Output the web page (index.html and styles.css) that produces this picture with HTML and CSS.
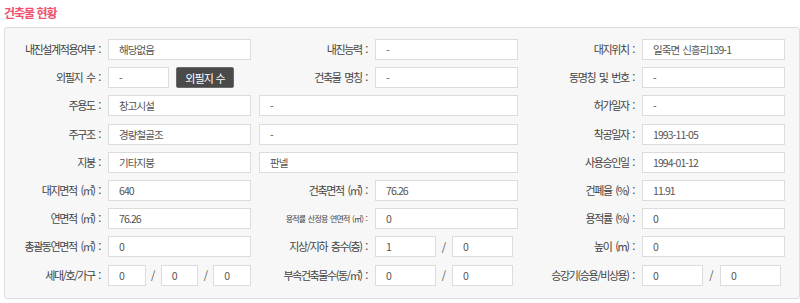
FILE: index.html
```html
<!DOCTYPE html>
<html lang="ko">
<head>
    <meta charset="UTF-8">
    <title>건축물 현황</title>
    <link rel="stylesheet" href="styles.css">
</head>
<body>
    <!-- 건축물 현황 -->
    <h2 class="section-title">건축물 현황</h2>
    <div class="info-panel">
        <div class="info-grid">
            <!-- 1행 -->
            <div class="info-label">내진설계적용여부 :</div>
            <div class="info-input">해당없음</div>
            <div class="info-label">내진능력 :</div>
            <div class="info-input">-</div>
            <div class="info-label">대지위치 :</div>
            <div class="info-input">일죽면 신흥리139-1</div>

            <!-- 2행 -->
            <div class="info-label">외필지 수 :</div>
            <div class="field-row">
                <div class="info-input w61">-</div>
                <button class="btn-dark">외필지 수</button>
            </div>
            <div class="info-label">건축물 명칭 :</div>
            <div class="info-input">-</div>
            <div class="info-label">동명칭 및 번호 :</div>
            <div class="info-input">-</div>

            <!-- 3행 -->
            <div class="info-label">주용도 :</div>
            <div class="info-input">창고시설</div>
            <div class="info-input span-wide">-</div>
            <div class="info-label">허가일자 :</div>
            <div class="info-input">-</div>

            <!-- 4행 -->
            <div class="info-label">주구조 :</div>
            <div class="info-input">경량철골조</div>
            <div class="info-input span-wide">-</div>
            <div class="info-label">착공일자 :</div>
            <div class="info-input">1993-11-05</div>

            <!-- 5행 -->
            <div class="info-label">지붕 :</div>
            <div class="info-input">기타지붕</div>
            <div class="info-input span-wide">판넬</div>
            <div class="info-label">사용승인일 :</div>
            <div class="info-input">1994-01-12</div>

            <!-- 6행 -->
            <div class="info-label">대지면적 (㎡) :</div>
            <div class="info-input">640</div>
            <div class="info-label">건축면적 (㎡) :</div>
            <div class="info-input">76.26</div>
            <div class="info-label">건폐율 (%) :</div>
            <div class="info-input">11.91</div>

            <!-- 7행 -->
            <div class="info-label">연면적 (㎡) :</div>
            <div class="info-input">76.26</div>
            <div class="info-label small">용적률 산정용 연면적 (㎡) :</div>
            <div class="info-input">0</div>
            <div class="info-label">용적률 (%) :</div>
            <div class="info-input">0</div>

            <!-- 8행 -->
            <div class="info-label">총괄동연면적 (㎡) :</div>
            <div class="info-input">0</div>
            <div class="info-label">지상/지하 층수(층) :</div>
            <div class="field-row">
                <div class="info-input w61">1</div>
                <span class="sep">/</span>
                <div class="info-input w61">0</div>
            </div>
            <div class="info-label">높이 (m) :</div>
            <div class="info-input">0</div>

            <!-- 9행 -->
            <div class="info-label">세대/호/가구 :</div>
            <div class="field-row">
                <div class="info-input w38">0</div>
                <span class="sep sep-narrow">/</span>
                <div class="info-input w38">0</div>
                <span class="sep sep-narrow">/</span>
                <div class="info-input w38">0</div>
            </div>
            <div class="info-label">부속건축물수(동/㎡) :</div>
            <div class="field-row">
                <div class="info-input w61">0</div>
                <span class="sep">/</span>
                <div class="info-input w61">0</div>
            </div>
            <div class="info-label">승강기(승용/비상용) :</div>
            <div class="field-row">
                <div class="info-input w61">0</div>
                <span class="sep sep-wide">/</span>
                <div class="info-input w61">0</div>
            </div>
        </div>
    </div>
</body>
</html>
```

FILE: styles.css
```css
* {
    margin: 0;
    padding: 0;
    box-sizing: border-box;
}

body {
    font-family: "Noto Sans CJK KR", "Noto Sans", sans-serif;
    color: #444;
    background-color: #fff;
    padding-left: 4px;
}

/* 제목 */
.section-title {
    font-size: 12px;
    font-weight: bold;
    letter-spacing: -1px;
    color: #f0506e;
    line-height: 16px;
    padding-top: 5px;
    height: 27px;
}

/* 패널 */
.info-panel {
    background-color: #f7f7f7;
    border: 1px solid #ddd;
    border-radius: 3px;
    padding: 11px 0 12px 0;
    height: 272px;
}

.info-grid {
    display: grid;
    grid-template-columns: 98px 143px 114px 143px 114px 143px;
    grid-auto-rows: 21px;
    column-gap: 5px;
    row-gap: 7.2px;
}

.info-label {
    font-size: 11px;
    letter-spacing: -1.4px;
    word-spacing: 2px;
    text-align: right;
    line-height: 21px;
    padding-right: 3px;
    white-space: nowrap;
    color: #444;
}

.info-label.small {
    font-size: 8px;
    letter-spacing: -0.8px;
    word-spacing: 1px;
}

.info-input {
    background-color: #fff;
    border: 1px solid #dcdcdc;
    height: 21px;
    line-height: 19px;
    padding-left: 10px;
    font-size: 10.5px;
    letter-spacing: -0.9px;
    word-spacing: 1px;
    color: #555;
    white-space: nowrap;
    overflow: hidden;
}

.span-wide {
    grid-column: span 2;
    margin-left: 3px;
}

.field-row {
    display: flex;
    align-items: center;
}

.w61 {
    width: 61px;
}

.w38 {
    width: 38px;
}

.sep {
    width: 16px;
    text-align: center;
    font-size: 11px;
    color: #555;
}

.sep-narrow {
    width: 15px;
}

.sep-wide {
    width: 17px;
}

/* 버튼 */
.btn-dark {
    margin-left: 7px;
    width: 58px;
    height: 21px;
    background-color: #4a4a4a;
    border: 1px solid #6a6a6a;
    border-radius: 2px;
    color: #fff;
    font-family: "Noto Sans CJK KR", "Noto Sans", sans-serif;
    font-size: 11px;
    letter-spacing: -0.8px;
    cursor: pointer;
}
```
